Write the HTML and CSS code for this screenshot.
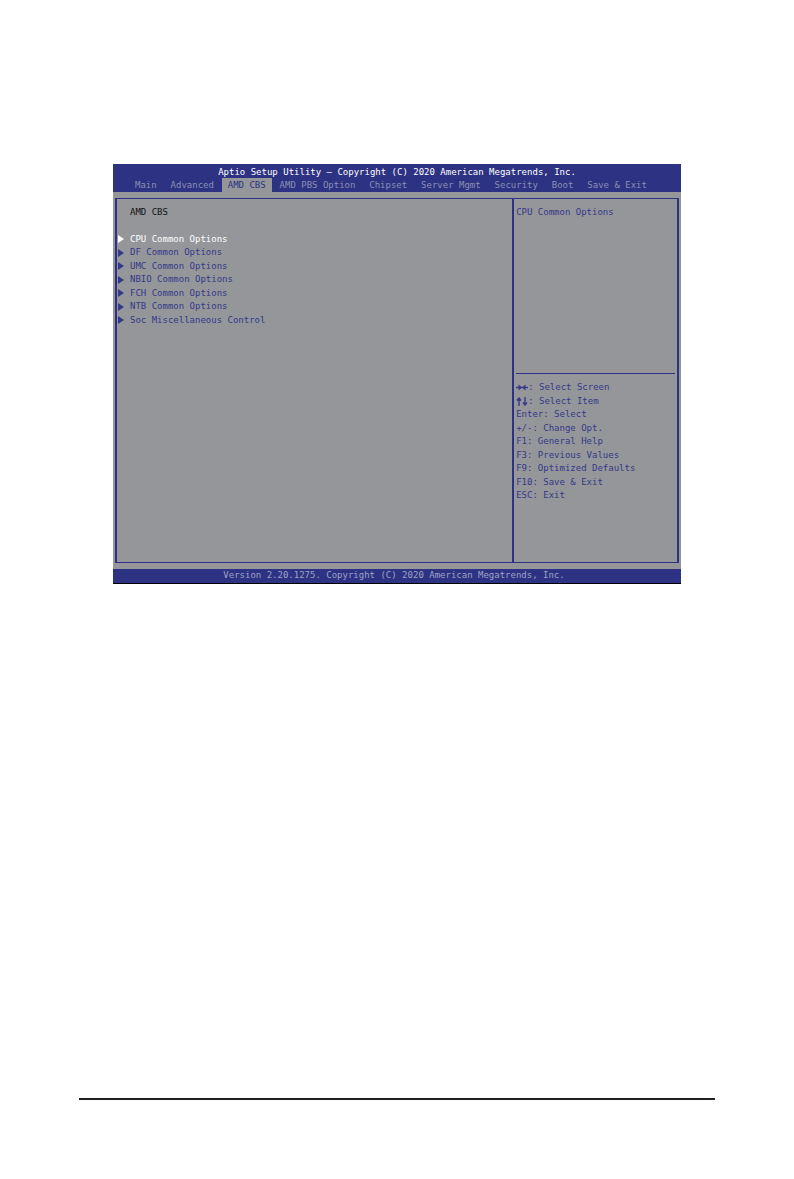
FILE: index.html
```html
<!DOCTYPE html>
<html lang="en">
<head>
<meta charset="utf-8">
<meta name="viewport" content="width=device-width, initial-scale=1">
<title>Aptio Setup Utility</title>
<link rel="stylesheet" href="styles.css">
</head>
<body>
<main class="bios">
  <header class="top">
    <h1 class="title">Aptio Setup Utility – Copyright (C) 2020 American Megatrends, Inc.</h1>
    <nav class="tabs">
      <a class="tab" href="#">Main</a>
      <a class="tab" href="#">Advanced</a>
      <a class="tab active" href="#" aria-current="page">AMD CBS</a>
      <a class="tab" href="#">AMD PBS Option</a>
      <a class="tab" href="#">Chipset</a>
      <a class="tab" href="#">Server Mgmt</a>
      <a class="tab" href="#">Security</a>
      <a class="tab" href="#">Boot</a>
      <a class="tab" href="#">Save &amp; Exit</a>
    </nav>
  </header>
  <div class="frame">
    <section class="panel">
      <h2 class="heading">AMD CBS</h2>
      <ul class="menu">
        <li><a class="item selected" href="#"><span class="arrow"></span>CPU Common Options</a></li>
        <li><a class="item" href="#"><span class="arrow"></span>DF Common Options</a></li>
        <li><a class="item" href="#"><span class="arrow"></span>UMC Common Options</a></li>
        <li><a class="item" href="#"><span class="arrow"></span>NBIO Common Options</a></li>
        <li><a class="item" href="#"><span class="arrow"></span>FCH Common Options</a></li>
        <li><a class="item" href="#"><span class="arrow"></span>NTB Common Options</a></li>
        <li><a class="item" href="#"><span class="arrow"></span>Soc Miscellaneous Control</a></li>
      </ul>
    </section>
    <aside class="side">
      <p class="hint">CPU Common Options</p>
      <ul class="keys">
        <li><svg class="glyph" viewBox="0 0 12 9" aria-hidden="true"><path d="M0 4.5h12"/><path class="solid" d="M2.5 1.5l3.5 3-3.5 3zM9.5 1.5l-3.5 3 3.5 3z"/></svg>: Select Screen</li>
        <li><svg class="glyph" viewBox="0 0 12 9" aria-hidden="true"><path d="M3 9V1M1 3.5l2-2.5 2 2.5M9 0v8M7 5.5l2 2.5 2-2.5"/></svg>: Select Item</li>
        <li>Enter: Select</li>
        <li>+/-: Change Opt.</li>
        <li>F1: General Help</li>
        <li>F3: Previous Values</li>
        <li>F9: Optimized Defaults</li>
        <li>F10: Save &amp; Exit</li>
        <li>ESC: Exit</li>
      </ul>
    </aside>
  </div>
  <footer class="bottom">Version 2.20.1275. Copyright (C) 2020 American Megatrends, Inc.</footer>
</main>
<hr class="rule">
</body>
</html>
```
FILE: styles.css
```css
* {
  box-sizing: border-box;
}

body {
  margin: 0;
  padding: 164px 79px 79px;
  min-height: 100vh;
  display: flex;
  flex-direction: column;
  justify-content: space-between;
  background: #fff;
}

h1, h2, p, ul {
  margin: 0;
  padding: 0;
  font-size: inherit;
  font-weight: normal;
  list-style: none;
}

a {
  color: inherit;
  text-decoration: none;
}

.bios {
  margin: 0 34px;
  display: flex;
  flex-direction: column;
  background: #949699;
  color: #35398a;
  font-family: "DejaVu Sans Mono", "Liberation Mono", monospace;
  font-size: 9px;
  line-height: 1.5;
  white-space: nowrap;
}

.top {
  background: #2d3282;
  color: #8b8fb5;
}

.title {
  padding-top: 2px;
  line-height: 12px;
  text-align: center;
  color: #fff;
}

.tabs {
  display: flex;
  justify-content: space-between;
  padding: 0 28px 0 16px;
  line-height: 14px;
}

.tab {
  padding: 0 6px;
}

.tab.active {
  background: #949699;
  color: #2d3282;
}

.frame {
  margin: 6px 2px;
  min-height: 365px;
  display: grid;
  grid-template-columns: 398fr 166fr;
  border: solid #2d3282;
  border-width: 1px 2px;
}

.panel {
  padding: 7px 1px;
}

.heading {
  padding-left: 12px;
  color: #111;
}

.menu {
  padding-top: 13px;
}

.item {
  display: flex;
  align-items: center;
  gap: 6px;
}

.item.selected {
  color: #fff;
}

.arrow {
  border-left: 6px solid currentColor;
  border-top: 4px solid transparent;
  border-bottom: 4px solid transparent;
}

.side {
  display: flex;
  flex-direction: column;
  padding: 7px 2px;
  border-left: 2px solid #2d3282;
}

.hint {
  min-height: 167px;
}

.keys {
  padding-top: 7px;
  border-top: 1px solid #2d3282;
}

.glyph {
  width: 12px;
  height: 9px;
  vertical-align: middle;
  fill: none;
  stroke: currentColor;
  stroke-width: 1.4;
}

.solid {
  fill: currentColor;
  stroke: none;
}

.bottom {
  padding-right: 6px;
  background: #2d3282;
  border-bottom: 1px solid #000;
  color: #9fa3c4;
  text-align: center;
}

.rule {
  width: 100%;
  margin: 0;
  border: 0;
  border-top: 2px solid #231f20;
}
```
